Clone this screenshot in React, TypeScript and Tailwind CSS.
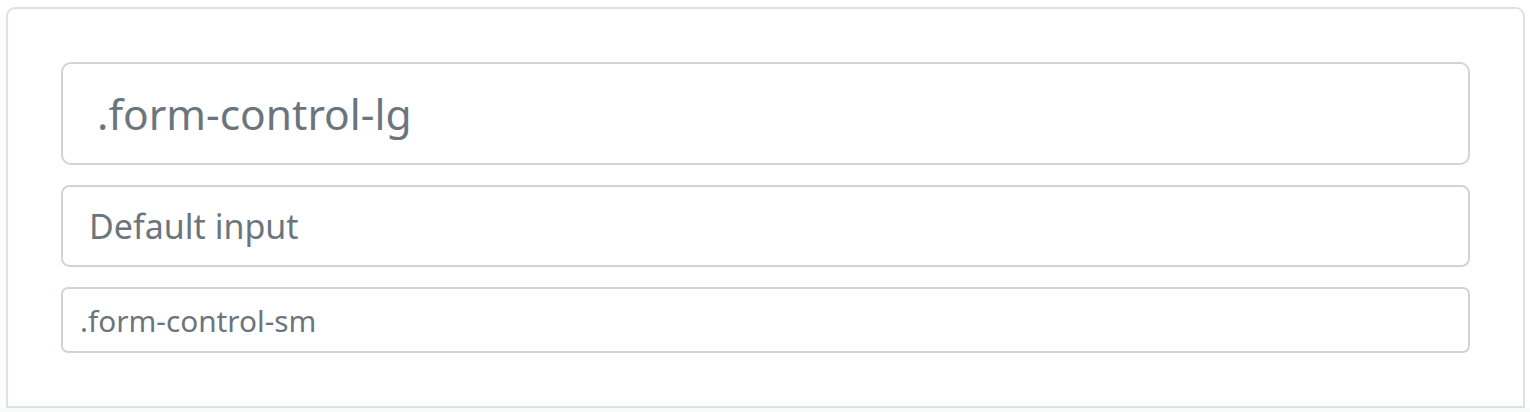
export default function App() {
  return (
    <div className="min-h-screen bg-white font-['Noto_Sans',sans-serif]">
      <div className="pl-[6px] pr-[5px] pt-[7px]">
        <div className="rounded-t-[9px] border-2 border-[#dee2e6] bg-white px-[53px] py-[53px]">
          <div className="flex flex-col gap-[20px]">
            <input
              type="text"
              placeholder=".form-control-lg"
              className="block h-[103px] w-full rounded-[10px] border-2 border-[#ced4da] bg-white px-[34px] text-[42.5px] text-[#495057] outline-none placeholder:text-[#6c757d]"
            />
            <input
              type="text"
              placeholder="Default input"
              className="block h-[82px] w-full rounded-[8.5px] border-2 border-[#ced4da] bg-white px-[26px] text-[34px] text-[#495057] outline-none placeholder:text-[#6c757d]"
            />
            <input
              type="text"
              placeholder=".form-control-sm"
              className="block h-[66px] w-full rounded-[7px] border-2 border-[#ced4da] bg-white px-[17px] text-[29.75px] text-[#495057] outline-none placeholder:text-[#6c757d]"
            />
          </div>
        </div>
      </div>
      <div className="h-[4px] bg-[#f8f9fa]" />
    </div>
  )
}
